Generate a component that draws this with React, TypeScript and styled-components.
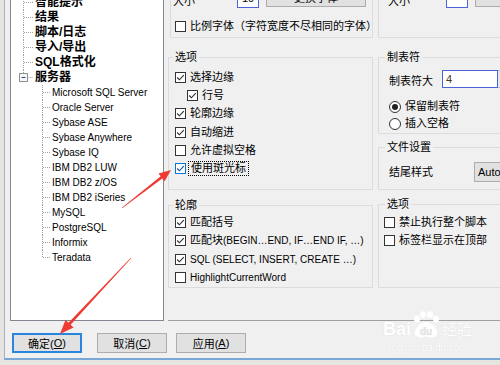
import React from "react";
import styled, { createGlobalStyle } from "styled-components";

const GlobalStyle = createGlobalStyle`
  html, body {
    margin: 0;
    padding: 0;
  }
  body {
    background: #e7e5e1;
    font-family: "Liberation Sans", "Noto Sans CJK SC", sans-serif;
    font-size: 11px;
    color: #000;
  }
`;

const topItems = ["智能提示", "结果", "脚本/日志", "导入/导出", "SQL格式化"];
const servers = [
  "Microsoft SQL Server",
  "Oracle Server",
  "Sybase ASE",
  "Sybase Anywhere",
  "Sybase IQ",
  "IBM DB2 LUW",
  "IBM DB2 z/OS",
  "IBM DB2 iSeries",
  "MySQL",
  "PostgreSQL",
  "Informix",
  "Teradata",
];

// tapered annotation arrow, tail -> tip
function arrowPoints(
  x1: number,
  y1: number,
  x2: number,
  y2: number,
  w0: number,
  w1: number,
  hl: number,
  hw: number
) {
  const dx = x2 - x1;
  const dy = y2 - y1;
  const len = Math.hypot(dx, dy);
  const ux = dx / len;
  const uy = dy / len;
  const nx = -uy;
  const ny = ux;
  const bx = x2 - ux * hl;
  const by = y2 - uy * hl;
  const pts = [
    [x1 + (nx * w0) / 2, y1 + (ny * w0) / 2],
    [bx + (nx * w1) / 2, by + (ny * w1) / 2],
    [bx + (nx * hw) / 2, by + (ny * hw) / 2],
    [x2, y2],
    [bx - (nx * hw) / 2, by - (ny * hw) / 2],
    [bx - (nx * w1) / 2, by - (ny * w1) / 2],
    [x1 - (nx * w0) / 2, y1 - (ny * w0) / 2],
  ];
  return pts.map((p) => p.map((v) => v.toFixed(1)).join(",")).join(" ");
}

const TopConnector: React.FC<{ expander?: boolean }> = ({ expander }) => (
  <svg width="24" height="15" viewBox="0 0 24 15">
    <g stroke="#a0a0a0" strokeDasharray="1 1" fill="none">
      <line x1="12.5" y1="0" x2="12.5" y2={expander ? 3.5 : 15} />
      <line x1={expander ? 16.5 : 13} y1="7.5" x2="22" y2="7.5" />
    </g>
    {expander && (
      <>
        <rect x="8.5" y="3.5" width="8" height="8" fill="#f7f7f7" stroke="#919191" />
        <line x1="10.5" y1="7.5" x2="14.5" y2="7.5" stroke="#2d4f8e" />
      </>
    )}
  </svg>
);

const SubConnector: React.FC<{ last?: boolean }> = ({ last }) => (
  <svg width="41" height="15" viewBox="0 0 41 15">
    <g stroke="#a0a0a0" strokeDasharray="1 1" fill="none">
      <line x1="31.5" y1="0" x2="31.5" y2={last ? 7.5 : 15} />
      <line x1="32" y1="7.5" x2="40" y2="7.5" />
    </g>
  </svg>
);

const CheckBox: React.FC<{ checked?: boolean; focused?: boolean }> = ({
  checked,
  focused,
}) => (
  <Box $focused={focused}>
    {checked && (
      <svg width="9" height="9" viewBox="0 0 9 9">
        <polyline
          points="1.2,4.5 3.4,6.8 7.8,2.1"
          fill="none"
          stroke={focused ? "#1c4e9a" : "#2b2b2b"}
          strokeWidth="1.1"
        />
      </svg>
    )}
  </Box>
);

const Option: React.FC<{
  label: React.ReactNode;
  checked?: boolean;
  focused?: boolean;
  h: number;
  indent?: number;
}> = ({ label, checked, focused, h, indent }) => (
  <OptionRow $h={h} $indent={indent}>
    <CheckBox checked={checked} focused={focused} />
    <OptionText $focused={focused}>{label}</OptionText>
  </OptionRow>
);

const Radio: React.FC<{ label: string; checked?: boolean }> = ({ label, checked }) => (
  <OptionRow $h={17}>
    <RadioCircle>{checked && <RadioDot />}</RadioCircle>
    <OptionText>{label}</OptionText>
  </OptionRow>
);

const App: React.FC = () => {
  return (
    <>
      <GlobalStyle />
      <Screen>
        <Dialog>
          <MainRow>
            <Tree>
              <TreeList>
                {topItems.map((t) => (
                  <TreeRow key={t}>
                    <TopConnector />
                    <TopLabel>{t}</TopLabel>
                  </TreeRow>
                ))}
                <TreeRow>
                  <TopConnector expander />
                  <TopLabel>服务器</TopLabel>
                </TreeRow>
                {servers.map((s, i) => (
                  <TreeRow key={s}>
                    <SubConnector last={i === servers.length - 1} />
                    <SubLabel>{s}</SubLabel>
                  </TreeRow>
                ))}
              </TreeList>
            </Tree>

            <TabPage>
              <LeftColumn>
                <TopGroup $ml={2}>
                  <SizeRow $inset={2}>
                    <FieldLabel $w={64}>大小</FieldLabel>
                    <SpinBox>10</SpinBox>
                    <PushButton $w={100}>更换字体</PushButton>
                  </SizeRow>
                  <ClipRow>
                    <Option h={13} label="比例字体（字符宽度不尽相同的字体）" />
                  </ClipRow>
                </TopGroup>

                <Group $top={13}>
                  <Legend $offset={4}>选项</Legend>
                  <GroupBody $pt={4} $pl={6} $pb={11}>
                    <Option h={18.3} checked label="选择边缘" />
                    <Option h={18.3} checked indent={12} label="行号" />
                    <Option h={18.3} checked label="轮廓边缘" />
                    <Option h={18.3} checked label="自动缩进" />
                    <Option h={18.3} label="允许虚拟空格" />
                    <Option h={18.3} checked focused label="使用斑光标" />
                  </GroupBody>
                </Group>

                <Group $top={9}>
                  <Legend $offset={4}>轮廓</Legend>
                  <GroupBody $pt={1} $pl={6} $pb={0}>
                    <Option h={18.5} checked label="匹配括号" />
                    <Option
                      h={18.5}
                      checked
                      label={
                        <>
                          匹配块<Latin>(BEGIN…END, IF…END IF, …)</Latin>
                        </>
                      }
                    />
                    <Option h={18.5} checked label={<Latin>SQL (SELECT, INSERT, CREATE …)</Latin>} />
                    <Option h={18.5} label={<Latin>HighlightCurrentWord</Latin>} />
                  </GroupBody>
                </Group>
              </LeftColumn>

              <RightColumn>
                <TopGroup $ml={0}>
                  <SizeRow $inset={9}>
                    <FieldLabel $w={58}>大小</FieldLabel>
                    <SpinBox />
                    <PushButton $w={100}>更换字体</PushButton>
                  </SizeRow>
                </TopGroup>

                <Group $top={13}>
                  <Legend $offset={6}>制表符</Legend>
                  <GroupBody $pt={6} $pl={10} $pb={1}>
                    <FieldRow>
                      <FieldLabel $w={53}>制表符大</FieldLabel>
                      <TabInput>4</TabInput>
                      <SpinButtons />
                    </FieldRow>
                    <RadioList>
                      <Radio checked label="保留制表符" />
                      <Radio label="插入空格" />
                    </RadioList>
                  </GroupBody>
                </Group>

                <Group $top={7}>
                  <Legend $offset={6}>文件设置</Legend>
                  <GroupBody $pt={8} $pl={10} $pb={7}>
                    <ComboRow>
                      <FieldLabel $w={85}>结尾样式</FieldLabel>
                      <ComboBox>Auto</ComboBox>
                    </ComboRow>
                  </GroupBody>
                </Group>

                <Group $top={8}>
                  <Legend $offset={6}>选项</Legend>
                  <GroupBody $pt={2} $pl={5} $pb={37}>
                    <Option h={18.5} label="禁止执行整个脚本" />
                    <Option h={18.5} label="标签栏显示在顶部" />
                  </GroupBody>
                </Group>
              </RightColumn>
            </TabPage>
          </MainRow>

          <Footer>
            <DialogButton $default $mr={15}>
              确定(<u>O</u>)
            </DialogButton>
            <DialogButton $mr={9}>
              取消(<u>C</u>)
            </DialogButton>
            <DialogButton>
              应用(<u>A</u>)
            </DialogButton>
          </Footer>
        </Dialog>

        <Watermark>
          <LogoLine>
            <LogoBai>Bai</LogoBai>
            <svg width="30" height="28" viewBox="0 0 30 28">
              <g fill="#ffffff">
                <ellipse cx="6" cy="8" rx="3" ry="3.6" />
                <ellipse cx="12" cy="3.6" rx="3" ry="3.4" />
                <ellipse cx="19" cy="3.6" rx="3" ry="3.4" />
                <ellipse cx="25" cy="8" rx="3" ry="3.6" />
                <path d="M15 11 C 9 11, 3 18, 4 23 C 5 27, 10 27, 15 25.5 C 20 27, 25 27, 26 23 C 27 18, 21 11, 15 11 Z" />
              </g>
              <text x="15" y="23.5" textAnchor="middle" fontSize="10" fontWeight="700" fill="#e4e4e4" fontFamily="Liberation Sans, sans-serif">
                du
              </text>
            </svg>
            <LogoJingyan>经验</LogoJingyan>
          </LogoLine>
          <LogoUrl>jingyan.baidu.com</LogoUrl>
        </Watermark>

        <Annotation width="500" height="365" viewBox="0 0 500 365">
          <polygon points={arrowPoints(122, 208, 171, 170, 0.6, 2.6, 12, 10)} fill="#ef3a33" />
          <polygon points={arrowPoints(131, 258, 60, 334, 0.6, 2.8, 14, 11)} fill="#ef3a33" />
        </Annotation>
      </Screen>
    </>
  );
};

const Screen = styled.div`
  position: relative;
  width: 500px;
  height: 365px;
  overflow: hidden;
  display: flex;
  align-items: flex-start;
`;

const Dialog = styled.div`
  flex: none;
  margin-left: 4px;
  width: 520px;
  height: 360px;
  box-sizing: border-box;
  background: #f0f0f0;
  border-left: 1px solid #a7b1bd;
  border-bottom: 2px solid #7aa7d8;
  display: flex;
  flex-direction: column;
  overflow: hidden;
`;

const MainRow = styled.div`
  display: flex;
  height: 321px;
  margin-left: 5px;
`;

const Tree = styled.div`
  flex: none;
  width: 154px;
  height: 321px;
  box-sizing: border-box;
  background: #fff;
  border: 1px solid #828790;
  border-top: none;
  overflow: hidden;
`;

const TreeList = styled.div`
  margin-top: -5.5px;
  display: flex;
  flex-direction: column;
`;

const TreeRow = styled.div`
  display: flex;
  align-items: center;
  height: 15px;
  white-space: nowrap;

  svg {
    flex: none;
  }
`;

const TopLabel = styled.span`
  font-size: 12px;
  font-weight: 700;
  line-height: 15px;
`;

const SubLabel = styled.span`
  font-size: 10px;
  line-height: 15px;
`;

const TabPage = styled.div`
  flex: none;
  margin-left: 4px;
  width: 360px;
  height: 321px;
  box-sizing: border-box;
  border-bottom: 1px solid #a0a0a0;
  display: flex;
  gap: 5px;
  align-items: flex-start;
`;

const LeftColumn = styled.div`
  flex: none;
  width: 205px;
  display: flex;
  flex-direction: column;
`;

const RightColumn = styled.div`
  flex: none;
  width: 150px;
  display: flex;
  flex-direction: column;
`;

const TopGroup = styled.div<{ $ml: number }>`
  margin-top: -20px;
  margin-left: ${(p) => p.$ml}px;
  height: 58px;
  box-sizing: border-box;
  border: 1px solid #dcdcdc;
  padding-top: 5px;
  display: flex;
  flex-direction: column;
`;

const SizeRow = styled.div<{ $inset: number }>`
  display: flex;
  align-items: flex-end;
  height: 22px;
  padding-left: ${(p) => p.$inset}px;
`;

const ClipRow = styled.div`
  margin-top: 12px;
  padding-left: 4px;
  padding-right: 3px;
  overflow: hidden;
`;

const FieldLabel = styled.span<{ $w: number }>`
  flex: none;
  width: ${(p) => p.$w}px;
  line-height: 13px;
  white-space: nowrap;
`;

const SpinBox = styled.div`
  flex: none;
  width: 22px;
  height: 20px;
  box-sizing: border-box;
  border: 1px solid #4c62d8;
  background: #fff;
  display: flex;
  align-items: center;
  justify-content: center;
  font-size: 11px;
`;

const PushButton = styled.div<{ $w: number }>`
  flex: none;
  width: ${(p) => p.$w}px;
  height: 21px;
  margin-left: 7px;
  margin-bottom: 1px;
  box-sizing: border-box;
  background: #e1e1e1;
  border: 1px solid #adadad;
  display: flex;
  align-items: center;
  justify-content: center;
`;

const Group = styled.fieldset<{ $top: number }>`
  margin: ${(p) => p.$top}px 0 0;
  padding: 0;
  border: 1px solid #dcdcdc;
  min-width: 0;
`;

const Legend = styled.legend<{ $offset: number }>`
  margin-left: ${(p) => p.$offset}px;
  padding: 0 2px;
  font-size: 11px;
  line-height: 13px;
`;

const GroupBody = styled.div<{ $pt: number; $pl: number; $pb: number }>`
  padding: ${(p) => p.$pt}px 3px ${(p) => p.$pb}px ${(p) => p.$pl}px;
  display: flex;
  flex-direction: column;
`;

const OptionRow = styled.div<{ $h: number; $indent?: number }>`
  display: flex;
  align-items: center;
  gap: 4px;
  height: ${(p) => p.$h}px;
  padding-left: ${(p) => p.$indent ?? 0}px;
  white-space: nowrap;
`;

const OptionText = styled.span<{ $focused?: boolean }>`
  line-height: 13px;
  padding: ${(p) => (p.$focused ? "1px 3px" : "0")};
  margin-left: ${(p) => (p.$focused ? "-2px" : "0")};
  outline: ${(p) => (p.$focused ? "1px dotted #000" : "none")};
  outline-offset: -1px;
`;

const Latin = styled.span`
  font-size: 10px;
`;

const Box = styled.span<{ $focused?: boolean }>`
  flex: none;
  width: 11px;
  height: 11px;
  box-sizing: border-box;
  border: 1px solid ${(p) => (p.$focused ? "#0078d7" : "#333")};
  background: #fff;
  display: flex;
  align-items: center;
  justify-content: center;
`;

const RadioCircle = styled.span`
  flex: none;
  width: 12px;
  height: 12px;
  box-sizing: border-box;
  border: 1px solid #333;
  border-radius: 50%;
  background: #fff;
  display: flex;
  align-items: center;
  justify-content: center;
`;

const RadioDot = styled.span`
  width: 6px;
  height: 6px;
  border-radius: 50%;
  background: #222;
`;

const FieldRow = styled.div`
  display: flex;
  align-items: flex-end;
  height: 18px;
`;

const TabInput = styled.div`
  flex: none;
  width: 56px;
  height: 18px;
  box-sizing: border-box;
  border: 1px solid #4c62d8;
  background: #fff;
  padding-left: 3px;
  line-height: 16px;
  color: #4a3520;
`;

const SpinButtons = styled.div`
  flex: none;
  width: 16px;
  height: 18px;
  box-sizing: border-box;
  background: #e6e6e6;
  border: 1px solid #c4c4c4;
  border-left: none;
`;

const RadioList = styled.div`
  margin-top: 10px;
  display: flex;
  flex-direction: column;
`;

const ComboRow = styled.div`
  display: flex;
  align-items: center;
  height: 20px;
`;

const ComboBox = styled.div`
  flex: none;
  width: 60px;
  height: 20px;
  box-sizing: border-box;
  background: #e1e1e1;
  border: 1px solid #adadad;
  padding-left: 3px;
  line-height: 18px;
`;

const Footer = styled.div`
  display: flex;
  margin-top: 12px;
  margin-left: 7px;
`;

const DialogButton = styled.div<{ $default?: boolean; $mr?: number }>`
  flex: none;
  width: 70px;
  height: 20px;
  margin-right: ${(p) => p.$mr ?? 0}px;
  box-sizing: border-box;
  background: #e1e1e1;
  border: ${(p) => (p.$default ? "2px solid #2a86dc" : "1px solid #adadad")};
  display: flex;
  align-items: center;
  justify-content: center;
  font-size: 11px;

  u {
    text-underline-offset: 1px;
  }
`;

const Watermark = styled.div`
  position: absolute;
  left: 383px;
  top: 311px;
  display: flex;
  flex-direction: column;
  align-items: center;
  color: #ffffff;
  text-shadow: 0 0 1px rgba(0, 0, 0, 0.12);
  pointer-events: none;
`;

const LogoLine = styled.div`
  display: flex;
  align-items: flex-end;
  height: 28px;
`;

const LogoBai = styled.span`
  font-family: "Liberation Sans", sans-serif;
  font-size: 18px;
  font-weight: 700;
  line-height: 20px;
`;

const LogoJingyan = styled.span`
  font-family: "Noto Sans CJK SC", sans-serif;
  font-size: 15px;
  line-height: 20px;
  margin-left: 1px;
`;

const LogoUrl = styled.span`
  font-family: "Liberation Sans", sans-serif;
  font-size: 10px;
  line-height: 12px;
  margin-top: 3px;
`;

const Annotation = styled.svg`
  position: absolute;
  left: 0;
  top: 0;
  pointer-events: none;
`;

export default App;
